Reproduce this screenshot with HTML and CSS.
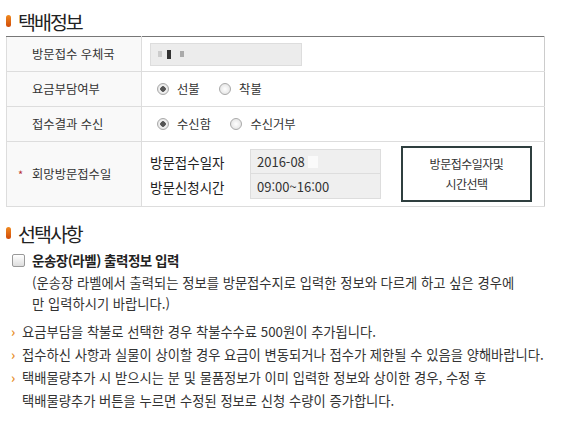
FILE: index.html
```html
<!DOCTYPE html>
<html lang="ko">
<head>
  <meta charset="UTF-8">
  <meta name="viewport" content="width=device-width, initial-scale=1.0">
  <title>택배정보</title>
  <link rel="stylesheet" href="styles.css">
</head>
<body>
  <h2 class="sec-title"><span class="sec-mark"></span>택배정보</h2>
  <table class="info-table">
    <tr class="row">
      <th>방문접수 우체국</th>
      <td>
        <div class="office-box">
          <span class="blur b1"></span><span class="blur b2"></span><span class="blur b3"></span>
        </div>
      </td>
    </tr>
    <tr class="row">
      <th>요금부담여부</th>
      <td>
        <label class="radio"><span class="radio-dot on"></span>선불</label>
        <label class="radio"><span class="radio-dot"></span>착불</label>
      </td>
    </tr>
    <tr class="row">
      <th>접수결과 수신</th>
      <td>
        <label class="radio"><span class="radio-dot on"></span>수신함</label>
        <label class="radio"><span class="radio-dot"></span>수신거부</label>
      </td>
    </tr>
    <tr class="row-tall">
      <th><span class="req">*</span>회망방문접수일</th>
      <td>
        <div class="visit">
          <div class="visit-grid">
            <span class="visit-label">방문접수일자</span>
            <span class="visit-value">2016-08<span class="blur-white"></span></span>
            <span class="visit-label">방문신청시간</span>
            <span class="visit-value">09:00~16:00</span>
          </div>
          <button class="visit-button">방문접수일자및<br>시간선택</button>
        </div>
      </td>
    </tr>
  </table>

  <h2 class="sec-title second"><span class="sec-mark"></span>선택사항</h2>
  <div class="option">
    <label class="check-line"><span class="check-box"></span>운송장(라벨) 출력정보 입력</label>
    <p class="option-desc">(운송장 라벨에서 출력되는 정보를 방문접수지로 입력한 정보와 다르게 하고 싶은 경우에<br>만 입력하시기 바랍니다.)</p>
  </div>

  <ul class="notes">
    <li>요금부담을 착불로 선택한 경우 착불수수료 500원이 추가됩니다.</li>
    <li>접수하신 사항과 실물이 상이할 경우 요금이 변동되거나 접수가 제한될 수 있음을 양해바랍니다.</li>
    <li>택배물량추가 시 받으시는 분 및 물품정보가 이미 입력한 정보와 상이한 경우, 수정 후<br>택배물량추가 버튼을 누르면 수정된 정보로 신청 수량이 증가합니다.</li>
  </ul>
</body>
</html>
```

FILE: styles.css
```css
body {
  margin: 0;
  padding: 8px 0 0 6px;
  font-family: "Noto Sans CJK KR", "Noto Sans", sans-serif;
  color: #333;
  background-color: #fff;
}
.sec-title {
  display: flex;
  align-items: center;
  margin: 0;
  height: 26px;
  font-size: 19.5px;
  font-weight: normal;
  letter-spacing: -2px;
  color: #222;
}
.sec-mark {
  display: inline-block;
  width: 5px;
  height: 12px;
  margin-right: 7px;
  border-radius: 3px;
  background: linear-gradient(#f08a20, #d04a08);
}
.sec-title.second {
  margin-top: 13px;
}
.info-table {
  width: 539px;
  margin-top: 2px;
  border-collapse: collapse;
  border-top: 1px solid #777;
}
.info-table th,
.info-table td {
  border: 1px solid #ddd;
  font-size: 12.3px;
}
.info-table tr:first-child th,
.info-table tr:first-child td {
  border-top: 1px solid #777;
}
.info-table th {
  width: 109px;
  padding: 0 0 0 25px;
  text-align: left;
  background-color: #f9f9f9;
  font-weight: normal;
  color: #333;
}
.info-table td {
  padding: 0 0 0 8px;
  border-right: 1px solid #ccc;
}
.row {
  height: 35px;
}
.row-tall {
  height: 65px;
}
.req {
  display: inline-block;
  width: 14px;
  margin-left: -14px;
  color: #b83030;
  font-size: 11px;
}
.office-box {
  display: flex;
  align-items: center;
  width: 146px;
  height: 21px;
  padding-left: 4px;
  border: 1px solid #ddd;
  background-color: #ececec;
}
.blur {
  display: inline-block;
  height: 6px;
  width: 4px;
  background-color: #bbb;
}
.b1 { margin-left: 3px; margin-right: 5px; background-color: #ccc; }
.b2 { width: 4px; height: 9px; background-color: #333; margin-right: 9px; }
.b3 { background-color: #aaa; }
.radio {
  display: inline-flex;
  align-items: center;
  margin-left: 7px;
  margin-right: 9px;
  font-size: 12.3px;
  color: #333;
}
.radio-dot {
  display: inline-block;
  box-sizing: border-box;
  width: 12px;
  height: 12px;
  margin-right: 8px;
  border: 1px solid #aaa;
  border-radius: 50%;
  background: radial-gradient(#fff, #ddd);
}
.radio-dot.on {
  background: radial-gradient(#555 0, #555 2.5px, #f4f4f4 3px, #ddd 6px);
}
.visit {
  display: flex;
  align-items: center;
}
.visit-grid {
  display: grid;
  grid-template-columns: 100px 131px;
  grid-auto-rows: 25px;
}
.visit-label {
  display: flex;
  align-items: center;
  font-size: 13.5px;
  color: #222;
}
.visit-value {
  display: flex;
  align-items: center;
  padding-left: 6px;
  border: 1px solid #ddd;
  background-color: #efefef;
  font-size: 13px;
  color: #333;
}
.visit-value + .visit-label + .visit-value {
  border-top: none;
}
.blur-white {
  display: inline-block;
  width: 10px;
  height: 12px;
  margin-left: 3px;
  background-color: #fafafa;
}
.visit-button {
  width: 131px;
  height: 56px;
  margin-left: 20px;
  border: 2px solid #2f3f3f;
  background-color: #fff;
  font-family: inherit;
  font-size: 12px;
  letter-spacing: -0.5px;
  line-height: 20px;
  color: #333;
  cursor: pointer;
}
.option {
  padding: 4px 0 0 6px;
}
.check-line {
  display: flex;
  align-items: center;
  font-size: 13.5px;
  font-weight: bold;
  letter-spacing: -0.5px;
  color: #222;
}
.check-box {
  display: inline-block;
  box-sizing: border-box;
  width: 13px;
  height: 13px;
  margin-right: 7px;
  border: 1px solid #999;
  border-radius: 2px;
  background: linear-gradient(#fff, #ddd);
}
.option-desc {
  margin: 2px 0 0 20px;
  font-size: 13.3px;
  line-height: 21px;
  color: #333;
}
.notes {
  margin: 6px 0 0 0;
  padding: 0;
  list-style: none;
}
.notes li {
  position: relative;
  padding-left: 16px;
  font-size: 13.3px;
  line-height: 23px;
  color: #333;
}
.notes li::before {
  content: "›";
  position: absolute;
  left: 5px;
  top: 0;
  color: #e8902a;
  font-weight: bold;
}
```
